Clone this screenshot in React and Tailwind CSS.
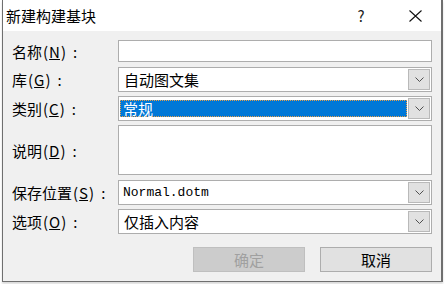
import React from "react";

const font = { fontFamily: '"Microsoft YaHei", "Noto Sans CJK SC", sans-serif' };

function Chevron() {
  return (
    <svg width="9" height="5" viewBox="0 0 9 5" fill="none">
      <path d="M0.5 0.5 L4.5 4.5 L8.5 0.5" stroke="#505050" strokeWidth="1" />
    </svg>
  );
}

function Label({ text, hot }) {
  return (
    <div className="w-[106px] shrink-0 text-[15px] text-black leading-none flex items-center">
      <span>{text}</span>
      <span className="pl-[1px]">(</span>
      <u className="px-[1px]">{hot}</u>
      <span>)</span>
      <span className="ml-[7px]">:</span>
    </div>
  );
}

function Combo({ children }) {
  return (
    <div className="flex-1 h-[25px] flex border border-[#adadad] bg-white">
      <div className="flex-1 flex items-center p-[1px] min-w-0">{children}</div>
      <div className="w-[22px] m-[1px] ml-0 bg-[#e1e1e1] border border-[#b9b9b9] flex items-center justify-center">
        <Chevron />
      </div>
    </div>
  );
}

export default function App() {
  return (
    <div className="w-[445px] h-[284px] bg-white overflow-hidden" style={font}>
      <div className="ml-[2px] w-[441px] h-[282px] border-l border-r-2 border-b border-[#6f6f6f] flex flex-col shadow-[0_2px_2px_rgba(0,0,0,0.15)]">
        {/* title bar */}
        <div className="h-[31px] bg-white flex items-center shrink-0">
          <div className="pl-[3px] text-[15px] text-black leading-none">新建构建基块</div>
          <div className="ml-auto w-[46px] text-center text-[15px] text-[#222] leading-none mr-[8px]">?</div>
          <div className="w-[46px] flex justify-center mr-[3px]">
            <svg width="13" height="12" viewBox="0 0 13 12">
              <path d="M0.5 0.5 L12.5 11.5 M12.5 0.5 L0.5 11.5" stroke="#111" strokeWidth="1.1" />
            </svg>
          </div>
        </div>

        {/* body */}
        <div className="flex-1 bg-[#f0f0f0] pl-[9px] pr-[9px] pt-[9px]">
          <div className="flex items-center">
            <Label text="名称" hot="N" />
            <div className="flex-1 h-[22px] border border-[#adadad] bg-white" />
          </div>

          <div className="flex items-center mt-[5px]">
            <Label text="库" hot="G" />
            <Combo>
              <span className="pl-[4px] text-[15px] leading-none text-black">自动图文集</span>
            </Combo>
          </div>

          <div className="flex items-center mt-[4px]">
            <Label text="类别" hot="C" />
            <Combo>
              <div className="w-full h-[17px] bg-[#0078d7] border border-dotted border-[#e8a04a] flex items-center">
                <span className="pl-[2px] text-[15px] leading-none text-white">常规</span>
              </div>
            </Combo>
          </div>

          <div className="flex items-center mt-[4px]">
            <Label text="说明" hot="D" />
            <div className="flex-1 h-[50px] border border-[#adadad] bg-white" />
          </div>

          <div className="flex items-center mt-[5px]">
            <Label text="保存位置" hot="S" />
            <Combo>
              <span className="pl-[3px] text-[13px] leading-none text-black" style={{ fontFamily: '"Liberation Mono", monospace' }}>
                Normal.dotm
              </span>
            </Combo>
          </div>

          <div className="flex items-center mt-[4px]">
            <Label text="选项" hot="O" />
            <Combo>
              <span className="pl-[4px] text-[15px] leading-none text-black">仅插入内容</span>
            </Combo>
          </div>

          <div className="flex justify-end gap-[15px] mt-[13px]">
            <div className="w-[112px] h-[25px] bg-[#cccccc] border border-[#bfbfbf] flex items-center justify-center text-[15px] leading-none text-[#a0a0a0]">
              确定
            </div>
            <div className="w-[112px] h-[25px] bg-[#e1e1e1] border border-[#adadad] flex items-center justify-center text-[15px] leading-none text-black">
              取消
            </div>
          </div>
        </div>
      </div>
    </div>
  );
}
